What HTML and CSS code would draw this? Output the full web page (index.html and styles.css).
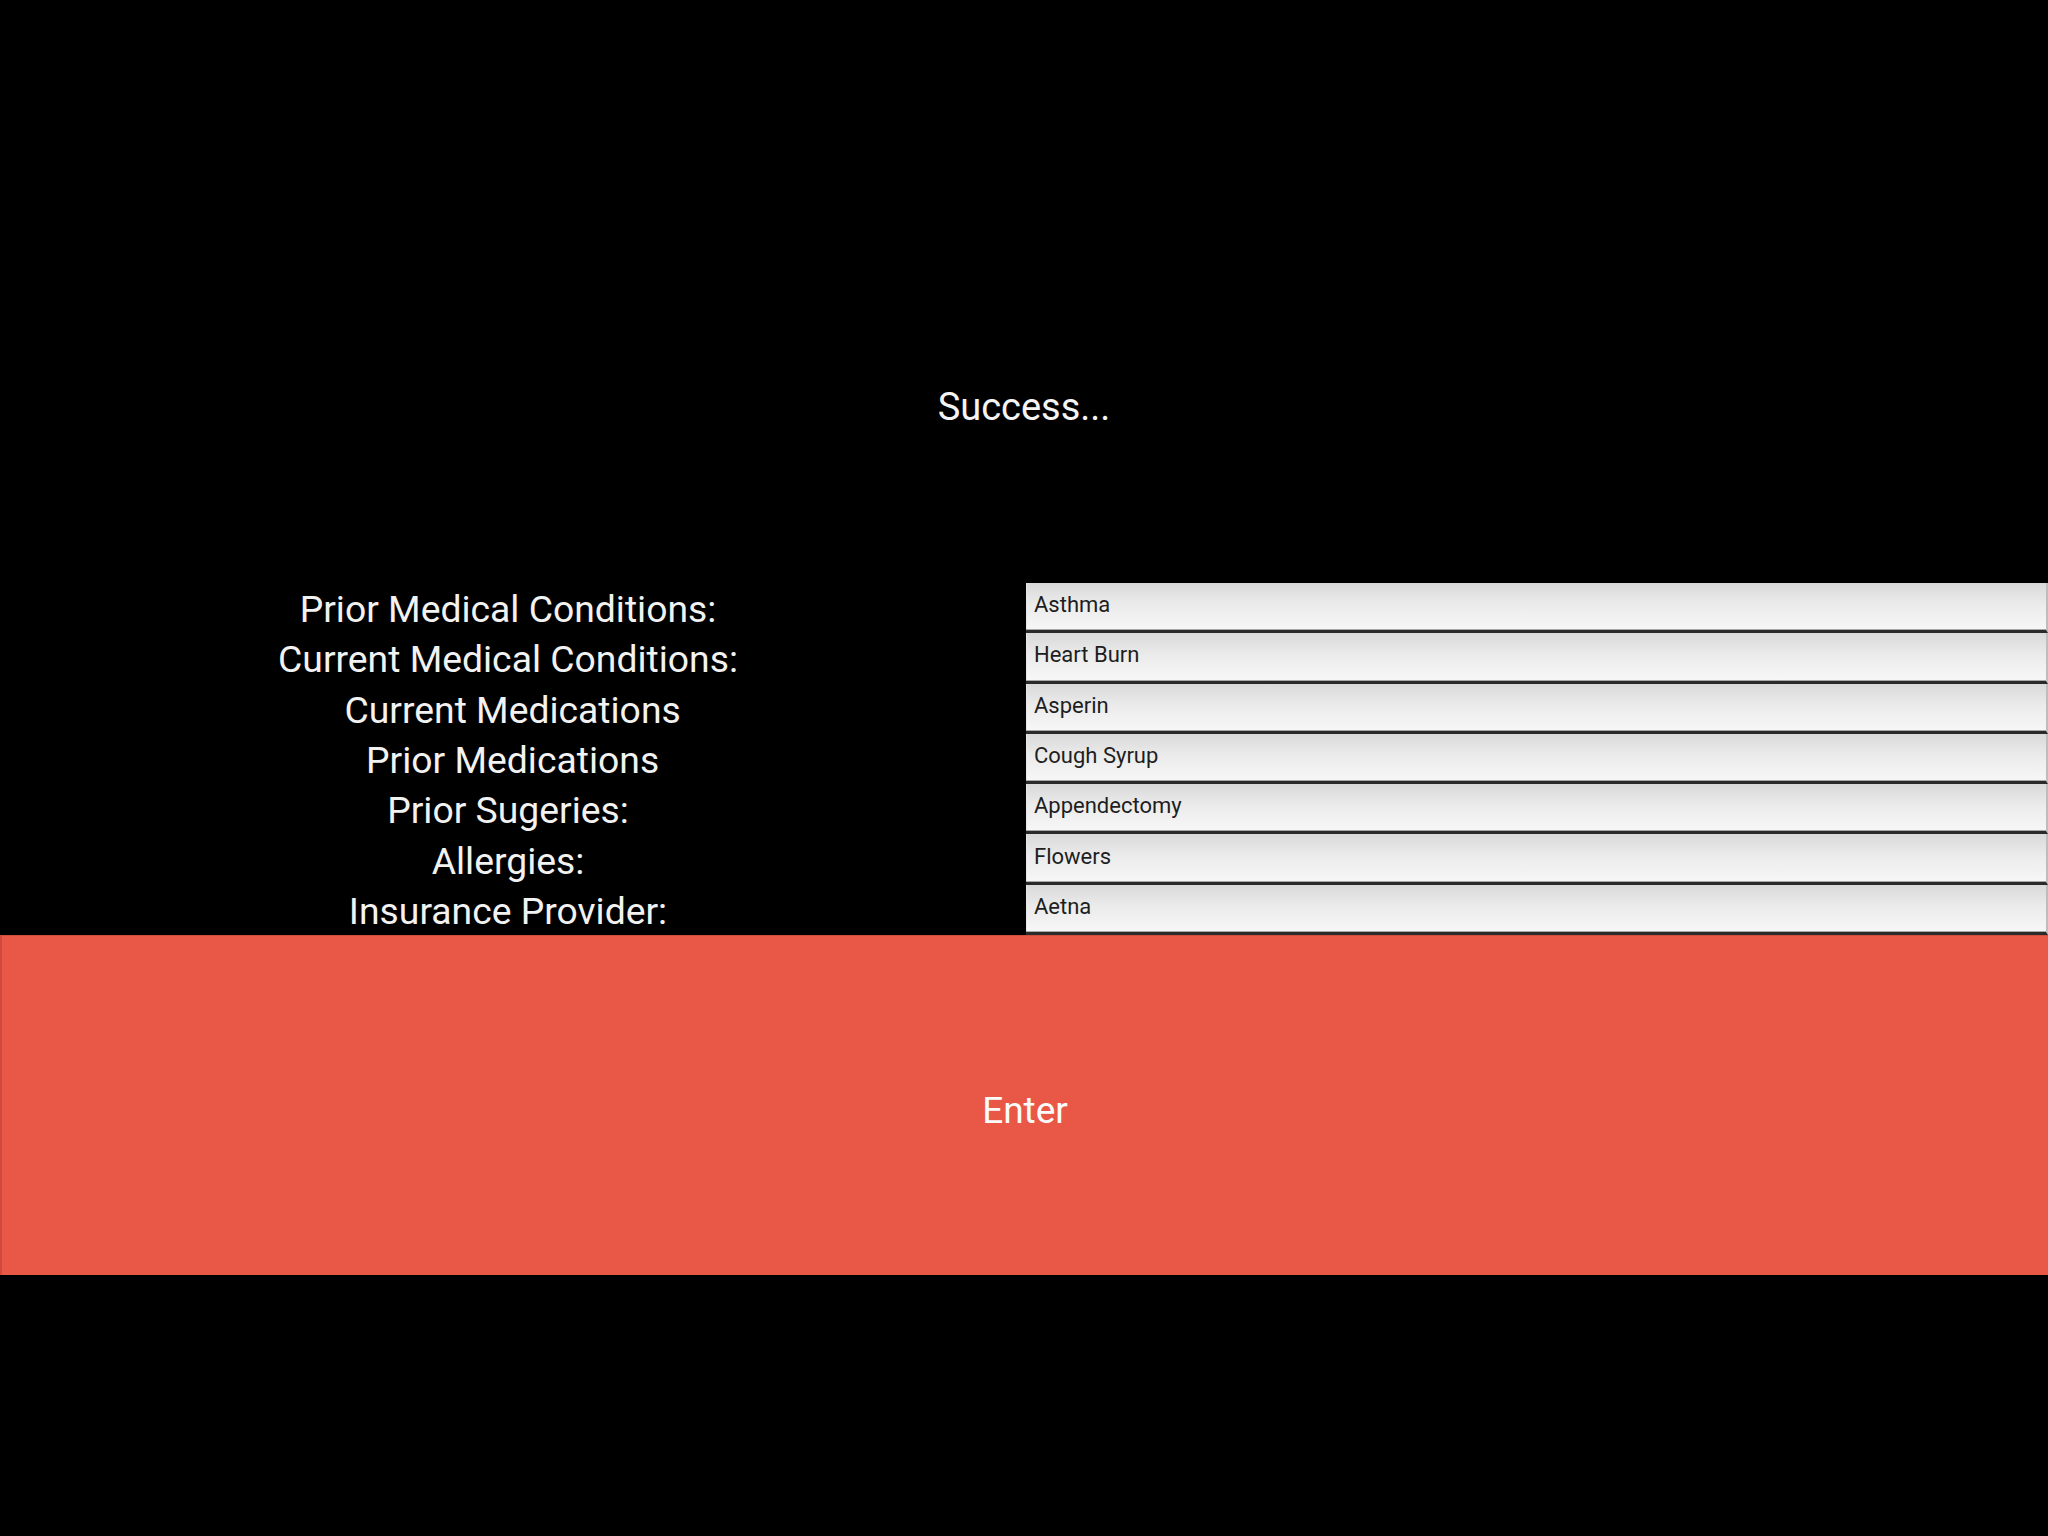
FILE: index.html
```html
<!DOCTYPE html>
<html lang="en">
<head>
<meta charset="utf-8">
<title>Medical Info</title>
<link rel="stylesheet" href="styles.css">
</head>
<body>
<main class="screen">
  <header class="status">
    <p class="status-text">Success...</p>
  </header>
  <form class="form">
    <label class="label" for="f1">Prior Medical Conditions:</label>
    <input class="field" id="f1" type="text" value="Asthma">
    <label class="label" for="f2">Current Medical Conditions:</label>
    <input class="field" id="f2" type="text" value="Heart Burn">
    <label class="label" for="f3">&nbsp;Current Medications</label>
    <input class="field" id="f3" type="text" value="Asperin">
    <label class="label" for="f4">&nbsp;Prior Medications</label>
    <input class="field" id="f4" type="text" value="Cough Syrup">
    <label class="label" for="f5">Prior Sugeries:</label>
    <input class="field" id="f5" type="text" value="Appendectomy">
    <label class="label" for="f6">Allergies:</label>
    <input class="field" id="f6" type="text" value="Flowers">
    <label class="label" for="f7">Insurance Provider:</label>
    <input class="field" id="f7" type="text" value="Aetna">
  </form>
  <button class="enter" type="button">Enter</button>
</main>
</body>
</html>
```

FILE: styles.css
```css
html, body {
  margin: 0;
  padding: 0;
  background: #000;
}

body {
  width: 2048px;
  height: 1536px;
  overflow: hidden;
  font-family: Roboto, "Liberation Sans", sans-serif;
  color: #fff;
}

.screen {
  display: flex;
  flex-direction: column;
}

.status {
  box-sizing: border-box;
  height: 583px;
  padding-top: 230px;
  display: flex;
  align-items: center;
  justify-content: center;
}

.status-text {
  margin: 0;
  font-size: 38px;
  color: #f4f4f4;
}

.form {
  display: grid;
  grid-template-columns: 1026px 1fr;
  grid-template-rows: repeat(7, 1fr);
  height: 352px;
  margin: 0;
}

.label {
  display: flex;
  align-items: center;
  justify-content: center;
  padding-right: 10px;
  padding-top: 2px;
  font-size: 37.3px;
  color: #f2f2f2;
  white-space: pre;
}

.field {
  box-sizing: border-box;
  width: 100%;
  height: 100%;
  margin: 0;
  padding: 0 8px 4px 8px;
  border: 0;
  border-right: 2px solid #bdbdbd;
  border-bottom: 3px solid #2a2a2a;
  border-radius: 0;
  background: linear-gradient(to bottom, #d9d9d9 0%, #ebebeb 45%, #f7f7f7 100%);
  box-shadow: inset 0 -1px 0 #a8a8a8, inset 1px 0 0 #e6e6e6;
  font-family: Roboto, "Liberation Sans", sans-serif;
  font-size: 22px;
  color: #1e1e1e;
  outline: none;
}

.enter {
  box-sizing: border-box;
  height: 340px;
  width: 100%;
  margin: 0;
  padding: 10px 0 0 0;
  border: 0;
  border-left: 2px solid #cf4a3c;
  border-top: 1px solid #d24d3f;
  background: #e95847;
  color: #fbfbfb;
  font-family: Roboto, "Liberation Sans", sans-serif;
  font-size: 37px;
  cursor: pointer;
}
```
